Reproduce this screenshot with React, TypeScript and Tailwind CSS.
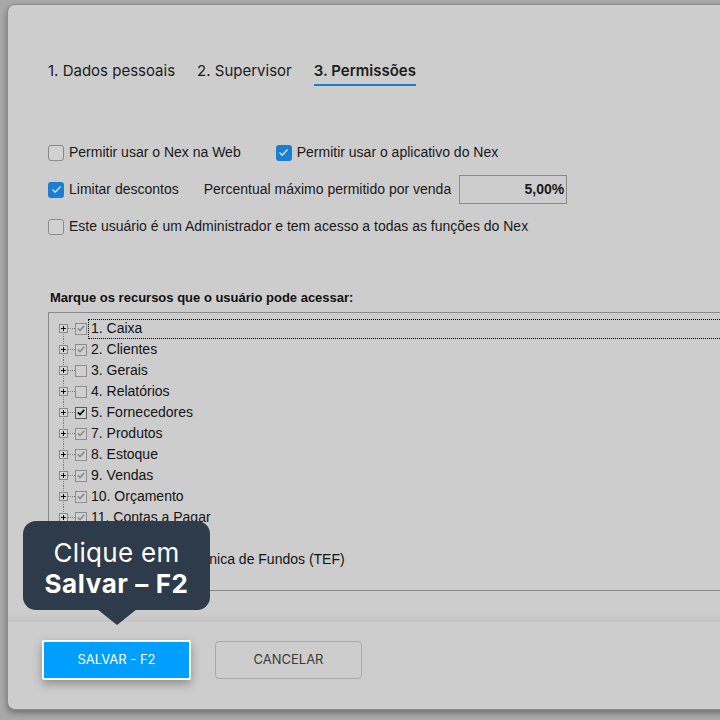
const tabs = [
  { label: '1. Dados pessoais', active: false },
  { label: '2. Supervisor', active: false },
  { label: '3. Permissões', active: true },
];

type Mark = 'gray' | 'black' | 'none';

const recursos: { label: string; mark: Mark }[] = [
  { label: '1. Caixa', mark: 'gray' },
  { label: '2. Clientes', mark: 'gray' },
  { label: '3. Gerais', mark: 'none' },
  { label: '4. Relatórios', mark: 'none' },
  { label: '5. Fornecedores', mark: 'black' },
  { label: '7. Produtos', mark: 'gray' },
  { label: '8. Estoque', mark: 'gray' },
  { label: '9. Vendas', mark: 'gray' },
  { label: '10. Orçamento', mark: 'gray' },
  { label: '11. Contas a Pagar', mark: 'gray' },
  { label: '12. Compras', mark: 'gray' },
  { label: '13. Transfer. Eletrônica de Fundos (TEF)', mark: 'gray' },
];

function BlueCheck({ checked }: { checked: boolean }) {
  if (!checked) {
    return <div className="w-4 h-4 shrink-0 rounded-[3px] border border-[#8a8a8a] bg-[#d2d2d2]" />;
  }
  return (
    <div className="w-4 h-4 shrink-0 rounded-[3px] bg-[#1a7fd0] flex items-center justify-center">
      <svg width="11" height="9" viewBox="0 0 11 9">
        <path d="M1.5 4.5 L4.2 7.2 L9.5 1.5" fill="none" stroke="#cfe6fb" strokeWidth="1.3" />
      </svg>
    </div>
  );
}

function TreeCheck({ mark }: { mark: Mark }) {
  const border = mark === 'black' ? 'border-[#5a5a5a]' : 'border-[#8e8e8e]';
  return (
    <div className={`w-[12px] h-[12px] shrink-0 border ${border} bg-[#d0d0d0] flex items-center justify-center`}>
      {mark !== 'none' && (
        <svg width="8" height="7" viewBox="0 0 8 7">
          <path
            d="M0.8 3.4 L3 5.6 L7.2 0.9"
            fill="none"
            stroke={mark === 'black' ? '#000' : '#8c8c8c'}
            strokeWidth="1.6"
          />
        </svg>
      )}
    </div>
  );
}

function PlusBox() {
  return (
    <div className="w-[9px] h-[9px] shrink-0 border border-[#8a8a8a] bg-[#d6d6d6] flex items-center justify-center">
      <svg width="7" height="7" viewBox="0 0 7 7">
        <path d="M1 3.5 H6 M3.5 1 V6" stroke="#000" strokeWidth="1" />
      </svg>
    </div>
  );
}

export default function App() {
  return (
    <div className="relative w-[720px] h-[720px] overflow-hidden bg-[#a9a9a9] pl-[7px] pt-[4px]" style={{ fontFamily: 'Inter, Roboto, sans-serif' }}>
      {/* modal window */}
      <div className="w-[760px] h-[706px] rounded-[8px] border border-[#8c8c8c] bg-[#cdcdcd] shadow-[0_3px_6px_rgba(0,0,0,0.35)] flex flex-col">
        {/* tabs */}
        <div className="flex pl-[40px] pt-[55px] text-[15px] text-[#1c1c1c]">
          {tabs.map((t, i) => (
            <div
              key={t.label}
              className={`pb-[1px] border-b-2 ${i > 0 ? 'ml-[22px]' : ''} ${
                t.active ? 'font-semibold border-[#1a7fcf]' : 'border-transparent'
              }`}
            >
              {t.label}
            </div>
          ))}
        </div>

        {/* options */}
        <div className="pl-[40px] pt-[59px] flex flex-col gap-[21px] text-[14px] text-[#1a1a1a]" style={{ fontFamily: '"Liberation Sans", Arial, sans-serif' }}>
          <div className="flex items-center h-[16px]">
            <BlueCheck checked={false} />
            <span className="ml-[5px]">Permitir usar o Nex na Web</span>
            <div className="ml-[35px] flex items-center">
              <BlueCheck checked />
              <span className="ml-[5px]">Permitir usar o aplicativo do Nex</span>
            </div>
          </div>
          <div className="flex items-center h-[16px]">
            <BlueCheck checked />
            <span className="ml-[5px]">Limitar descontos</span>
            <span className="ml-[25px]">Percentual máximo permitido por venda</span>
            <div className="ml-[8px] w-[108px] h-[29px] border border-[#8a8a8a] flex items-center justify-end pr-[2px] font-bold">
              5,00%
            </div>
          </div>
          <div className="flex items-center h-[16px]">
            <BlueCheck checked={false} />
            <span className="ml-[5px]">Este usuário é um Administrador e tem acesso a todas as funções do Nex</span>
          </div>
        </div>

        {/* recursos */}
        <div className="pl-[42px] pt-[53px] text-[13px] font-bold text-[#111]" style={{ fontFamily: '"Liberation Sans", Arial, sans-serif' }}>
          Marque os recursos que o usuário pode acessar:
        </div>
        <div className="ml-[40px] mt-[5px] h-[279px] border-t border-l border-b border-[#8a8a8a] overflow-hidden pt-[5px]" style={{ fontFamily: '"Liberation Sans", Arial, sans-serif' }}>
          {recursos.map((r, i) => (
            <div key={r.label} className="relative flex items-center h-[21px] pl-[10px] text-[14px] text-[#141414]">
              {/* dotted tree guide */}
              <div
                className={`absolute left-[14px] w-0 border-l border-dotted border-[#7a7a7a] ${
                  i === 0 ? 'top-[10px] h-[11px]' : 'top-0 h-[21px]'
                }`}
              />
              <div className="relative">
                <PlusBox />
              </div>
              <div className="w-[7px] border-t border-dotted border-[#7a7a7a]" />
              <TreeCheck mark={r.mark} />
              <span
                className={`ml-[1px] pl-[2px] pr-[2px] h-[20px] flex items-center ${
                  i === 0 ? 'border border-dotted border-black flex-1' : 'border border-transparent'
                }`}
              >
                {r.label}
              </span>
            </div>
          ))}
        </div>

        {/* footer */}
        <div className="mt-[22px] h-[9px] bg-gradient-to-b from-[#cdcdcd] to-[#c4c4c4]" />
        <div className="flex items-start pl-[34px] pt-[18px] gap-[24px] text-[13px]">
          <button className="w-[149px] h-[40px] bg-[#009ffd] border-2 border-white rounded-[2px] text-white shadow-[0_4px_10px_rgba(0,0,0,0.3)]">
            SALVAR - F2
          </button>
          <button className="mt-[1px] w-[147px] h-[38px] border border-[#a8a8a8] rounded-[4px] text-[#3a3a3a]">
            CANCELAR
          </button>
        </div>
      </div>

      {/* tooltip */}
      <div className="absolute z-20 left-[23px] top-[521px] w-[187px] h-[89px] rounded-[13px] bg-[#2d3b4b] text-white text-[26px] leading-[31px] flex flex-col items-center justify-center pt-[4px]">
        <span className="tracking-[0.3px]">Clique em</span>
        <span className="font-bold tracking-[0.6px]">Salvar – F2</span>
        <div className="absolute left-[74px] top-[88px] w-0 h-0 border-l-[20px] border-r-[20px] border-t-[16px] border-l-transparent border-r-transparent border-t-[#2d3b4b]" />
      </div>
    </div>
  );
}
